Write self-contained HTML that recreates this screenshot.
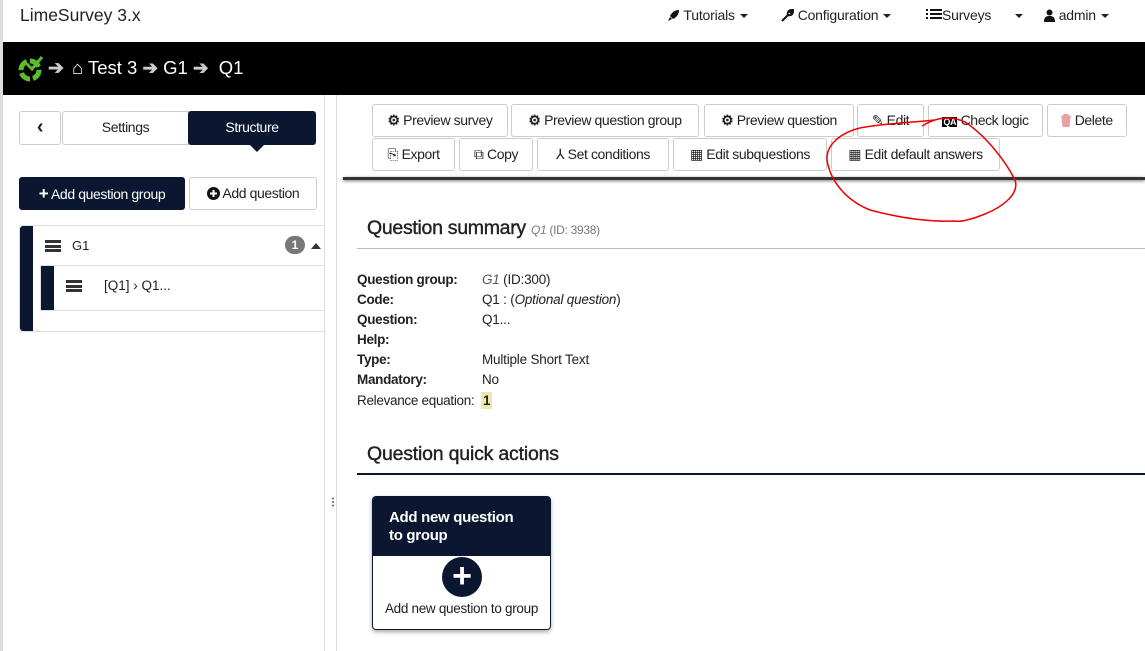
<!DOCTYPE html>
<html><head><meta charset="utf-8"><style>
*{box-sizing:border-box;margin:0;padding:0}
body{width:1145px;height:651px;overflow:hidden;background:#fff;font-family:"Liberation Sans",sans-serif;color:#1e1e1e;position:relative;font-size:14px}
.a{position:absolute}
.btn{position:absolute;height:33px;border:1px solid #ccc;border-radius:3px;background:#fff;font-size:14px;line-height:31px;text-align:center;white-space:nowrap;letter-spacing:-0.4px;color:#222}
.nav{position:absolute;top:7px;font-size:14px;color:#222;letter-spacing:-0.2px}
.caret{display:inline-block;width:0;height:0;border-left:4px solid transparent;border-right:4px solid transparent;border-top:4px solid #222;vertical-align:middle;margin-left:5px}
.lbl{position:absolute;left:357px;font-weight:bold;font-size:13.5px;letter-spacing:-0.3px;color:#222}
.val{position:absolute;left:482px;font-size:13.5px;letter-spacing:-0.2px;color:#222}
.ham{position:absolute;width:16px;height:12px;border-top:3px solid #333;border-bottom:3px solid #333}
.ham:after{content:"";position:absolute;left:0;right:0;top:1.5px;height:3px;background:#333}
.ic{display:inline-block;vertical-align:-2px}
</style></head><body>
<div class="a" style="left:0;top:0;width:3px;height:651px;background:#ddd"></div>
<div class="a" style="left:20px;top:5px;font-size:17.5px;color:#222">LimeSurvey 3.x</div>
<div class="nav" style="left:667px"><svg class="ic" width="13" height="13" viewBox="0 0 13 13"><path d="M12 1 C8 1 5 3 3 7 L6 10 C10 8 12 5 12 1Z M3 8 L1 12 L5 10Z" fill="#111"/></svg> Tutorials<span class="caret"></span></div>
<div class="nav" style="left:781px"><svg class="ic" width="13" height="13" viewBox="0 0 13 13"><path d="M1 12 L7 6 M7 6 C6 3 8 1 11 1 L9 3 L10 4 L12 2 C12 5 10 7 7 6" fill="none" stroke="#111" stroke-width="2"/></svg> Configuration<span class="caret"></span></div>
<div class="nav" style="left:926px"><svg class="ic" width="16" height="14" viewBox="0 0 16 14"><g fill="#111"><rect x="0" y="1" width="2" height="2"/><rect x="4" y="1" width="12" height="2"/><rect x="0" y="5" width="2" height="2"/><rect x="4" y="5" width="12" height="2"/><rect x="0" y="9" width="2" height="2"/><rect x="4" y="9" width="12" height="2"/></g></svg>Surveys &nbsp;&nbsp;&nbsp;&nbsp;<span class="caret"></span></div>
<div class="nav" style="left:1044px"><svg class="ic" width="11" height="13" viewBox="0 0 11 13"><circle cx="5.5" cy="3.5" r="3" fill="#111"/><path d="M0 13 C0 8 2 7 5.5 7 C9 7 11 8 11 13Z" fill="#111"/></svg> admin<span class="caret"></span></div>

<div class="a" style="left:3px;top:42px;width:1142px;height:53px;background:#000"></div>
<svg class="a" style="left:18px;top:54px" width="26" height="28" viewBox="0 0 26 28"><circle cx="12" cy="16" r="9" fill="none" stroke="#5bbd2a" stroke-width="5" stroke-dasharray="11 3"/><path d="M9 10 L14 15 L24 3" fill="none" stroke="#5bbd2a" stroke-width="3"/></svg>
<div class="a" style="left:48px;top:57px;color:#ccc;font-size:19px;font-weight:bold">➔</div>
<div class="a" style="left:72px;top:57px;color:#fff;font-size:18.5px">⌂ Test 3 <span style="color:#ccc;font-weight:bold">➔</span> G1 <span style="color:#ccc;font-weight:bold">➔</span> &nbsp;Q1</div>

<!-- sidebar -->
<div class="a" style="left:324px;top:95px;width:1px;height:556px;background:#ddd"></div>
<div class="a" style="left:336px;top:95px;width:1px;height:556px;background:#ddd"></div>
<div class="a" style="left:328px;top:497px;font-size:10px;font-weight:bold">⋮</div>
<div class="btn" style="left:19px;top:111px;width:42px;height:34px;font-weight:bold;font-size:20px;line-height:30px">‹</div>
<div class="btn" style="left:62px;top:111px;width:127px;height:34px;border-radius:3px 0 0 3px">Settings</div>
<div class="btn" style="left:188px;top:111px;width:128px;height:34px;background:#0b1730;border-color:#0b1730;color:#fff">Structure</div>
<div class="a" style="left:249px;top:144px;width:0;height:0;border-left:8px solid transparent;border-right:8px solid transparent;border-top:8px solid #0b1730"></div>
<div class="btn" style="left:19px;top:177px;width:166px;height:33px;background:#0b1730;border-color:#0b1730;color:#fff"><b style="font-size:17px">+</b> Add question group</div>
<div class="btn" style="left:189px;top:177px;width:128px;height:33px"><svg class="ic" width="13" height="13" viewBox="0 0 13 13"><circle cx="6.5" cy="6.5" r="6.5" fill="#111"/><path d="M3 6.5H10M6.5 3V10" stroke="#fff" stroke-width="2"/></svg> Add question</div>
<div class="a" style="left:19px;top:225px;width:306px;height:107px;border:1px solid #ddd;border-right:none;border-radius:3px 0 0 3px"></div>
<div class="a" style="left:20px;top:226px;width:13px;height:105px;background:#0b1730;border-radius:3px 0 0 3px"></div>
<div class="ham" style="left:45px;top:240px"></div>
<div class="a" style="left:72px;top:238px;font-size:13px">G1</div>
<div class="a" style="left:285px;top:236px;width:20px;height:18px;border-radius:9px;background:#777;color:#fff;font-size:12px;font-weight:bold;text-align:center;line-height:18px">1</div>
<div class="a" style="left:311px;top:243px;border-left:5px solid transparent;border-right:5px solid transparent;border-bottom:6px solid #333"></div>
<div class="a" style="left:40px;top:265px;width:285px;height:46px;border:1px solid #ddd;border-right:none;border-radius:3px 0 0 3px"></div>
<div class="a" style="left:41px;top:266px;width:13px;height:44px;background:#0b1730"></div>
<div class="ham" style="left:66px;top:280px"></div>
<div class="a" style="left:104px;top:278px;font-size:13.5px">[Q1] › Q1...</div>

<!-- toolbar -->
<div class="btn" style="left:372px;top:104px;width:136px"><b>⚙</b> Preview survey</div>
<div class="btn" style="left:511px;top:104px;width:188px"><b>⚙</b> Preview question group</div>
<div class="btn" style="left:704px;top:104px;width:150px"><b>⚙</b> Preview question</div>
<div class="btn" style="left:857px;top:104px;width:67px">✎ Edit</div>
<div class="btn" style="left:928px;top:104px;width:115px"><span style="background:#000;color:#fff;font-size:9px;font-weight:bold;padding:0 1px">QA</span> Check logic</div>
<div class="btn" style="left:1047px;top:104px;width:80px"><svg class="ic" width="10" height="13" viewBox="0 0 10 13"><path d="M0 2H10M3 2V0H7V2M1 3H9L8 13H2Z" fill="#e8a0a0" stroke="#e8a0a0"/></svg> Delete</div>
<div class="btn" style="left:372px;top:138px;width:83px">⎘ Export</div>
<div class="btn" style="left:459px;top:138px;width:74px">⧉ Copy</div>
<div class="btn" style="left:537px;top:138px;width:132px">⅄ Set conditions</div>
<div class="btn" style="left:673px;top:138px;width:154px">▦ Edit subquestions</div>
<div class="btn" style="left:831px;top:138px;width:169px">▦ Edit default answers</div>
<div class="a" style="left:343px;top:177px;width:802px;height:3px;background:#333;box-shadow:0 1px 3px #777"></div>

<svg class="a" style="left:0;top:0" width="1145" height="651"><path d="M922 126 C935 118 950 115 965 122 C985 135 1005 160 1015 180 C1020 195 1000 208 985 214 C970 220 960 222 955 221 C930 222 900 218 870 210 C845 200 830 180 827 160 C826 145 840 133 860 128 C880 124 905 123 935 120" fill="none" stroke="#e00" stroke-width="1.5"/></svg>

<!-- summary -->
<div class="a" style="left:367px;top:217px;font-size:19.5px;color:#222;letter-spacing:-0.3px;-webkit-text-stroke:0.4px #222">Question summary <span style="font-size:12px;color:#777;-webkit-text-stroke:0"><i>Q1</i> (ID: 3938)</span></div>
<div class="a" style="left:357px;top:248px;width:788px;height:1px;background:#bbb"></div>
<div class="lbl" style="top:272px">Question group:</div><div class="val" style="top:272px"><i style="color:#555">G1</i> (ID:300)</div>
<div class="lbl" style="top:292px">Code:</div><div class="val" style="top:292px">Q1 : (<i>Optional question</i>)</div>
<div class="lbl" style="top:312px">Question:</div><div class="val" style="top:312px">Q1...</div>
<div class="lbl" style="top:332px">Help:</div>
<div class="lbl" style="top:352px">Type:</div><div class="val" style="top:352px">Multiple Short Text</div>
<div class="lbl" style="top:372px">Mandatory:</div><div class="val" style="top:372px">No</div>
<div class="lbl" style="top:393px;font-weight:normal">Relevance equation:</div><div class="val" style="top:392px;left:481px;background:#eee8b0;font-weight:bold;padding:1px 2px">1</div>

<div class="a" style="left:367px;top:443px;font-size:19.5px;color:#222;letter-spacing:-0.2px;-webkit-text-stroke:0.4px #222">Question quick actions</div>
<div class="a" style="left:357px;top:473px;width:788px;height:2px;background:#0b1730"></div>
<div class="a" style="left:372px;top:496px;width:179px;height:134px;border:1px solid #0b1730;border-radius:4px;box-shadow:0 2px 4px #aaa;overflow:hidden">
<div style="background:#0b1730;color:#fff;height:59px;padding:12px 30px 0 16px;font-weight:bold;font-size:15px;line-height:18px;letter-spacing:-0.3px">Add new question to group</div>
<div class="a" style="left:69px;top:60px;width:40px;height:40px;border-radius:20px;background:#0b1730;color:#fff;font-size:34px;font-weight:bold;line-height:38px;text-align:center">+</div>
<div class="a" style="left:0;top:104px;width:177px;text-align:center;font-size:13.5px;letter-spacing:-0.3px">Add new question to group</div>
</div>
</body></html>
